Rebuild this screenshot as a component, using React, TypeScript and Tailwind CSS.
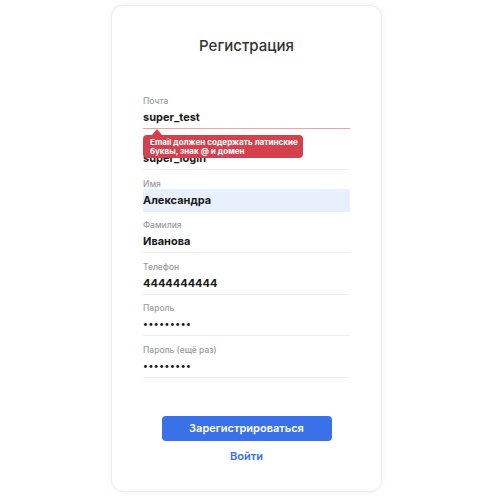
import React from "react";

const fields = [
  { label: "Почта", value: "super_test", error: true },
  { label: "Логин", value: "super_login" },
  { label: "Имя", value: "Александра", autofill: true },
  { label: "Фамилия", value: "Иванова" },
  { label: "Телефон", value: "4444444444" },
  { label: "Пароль", value: "•••••••••", pwd: true },
  { label: "Пароль (ещё раз)", value: "•••••••••", pwd: true },
];

export default function App() {
  return (
    <div className="w-[500px] h-[501px] bg-white pl-[111px] pt-[5px]" style={{ fontFamily: "Inter, 'Noto Sans', sans-serif" }}>
      <div className="w-[271px] h-[487px] rounded-[12px] border border-[#ececec] shadow-[0_0_6px_rgba(0,0,0,0.06)] bg-white px-[31px] flex flex-col">
        <div className="h-[81px] pt-[30px] text-center text-[15px] leading-[20px] font-medium text-[#333]">Регистрация</div>
        <div className="flex flex-col">
          {fields.map((f, i) => (
            <div key={i} className="relative">
              <div className={`pt-[6.5px] border-b ${f.error ? "border-[#f2a3a6]" : "border-[#eeeeee]"}`}>
                <div className="h-[12px] text-[8.5px] leading-[15px] font-medium text-[#9a9a9a]">{f.label}</div>
                <div
                  className={`h-[22px] leading-[22px] text-[#1a1a1a] ${f.autofill ? "bg-[#e8f0fe]" : ""} ${
                    f.pwd ? "text-[9.5px] tracking-[0.6px] font-semibold" : "text-[11px] font-bold"
                  }`}
                >
                  {f.value}
                </div>
              </div>
              {f.error && (
                <div className="absolute left-0 top-[48px] z-10 w-[160px] rounded-[4px] bg-[#d2414d] pl-[7px] pr-[4px] py-[2.5px] text-[8.1px] leading-[9px] font-bold text-white whitespace-nowrap">
                  <div className="absolute left-[9px] top-[-6px] h-0 w-0 border-l-[5px] border-r-[5px] border-b-[6px] border-l-transparent border-r-transparent border-b-[#d2414d]" />
                  Email должен содержать латинские
                  <br />
                  буквы, знак @ и домен
                </div>
              )}
            </div>
          ))}
        </div>
        <div className="mt-[38px] flex flex-col items-center">
          <button className="w-[170px] h-[25px] rounded-[4px] bg-[#3a70e8] text-white text-[11px] font-semibold">
            Зарегистрироваться
          </button>
          <div className="mt-[7px] text-[11px] font-semibold text-[#3a70e8]">Войти</div>
        </div>
      </div>
    </div>
  );
}
